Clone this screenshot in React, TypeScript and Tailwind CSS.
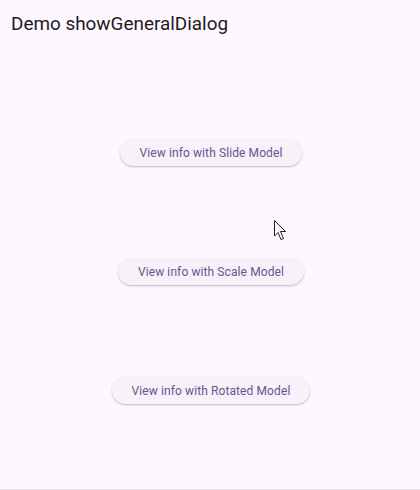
import React from 'react';

const models = ['Slide', 'Scale', 'Rotated'];

function Cursor() {
  return (
    <svg
      className="absolute left-[273px] top-[219px]"
      width="16"
      height="24"
      viewBox="0 0 16 24"
    >
      <path
        d="M1.5 1.5 L1.5 17 L5 13.5 L8 20.5 L10.5 19.5 L7.5 12.5 L12.5 12.5 Z"
        fill="#ffffff"
        stroke="#1d1b20"
        strokeWidth="1"
        strokeLinejoin="round"
      />
    </svg>
  );
}

export default function App() {
  return (
    <div
      className="relative flex h-[490px] w-full flex-col bg-[#fef7ff]"
      style={{ fontFamily: 'Roboto, "Noto Sans", sans-serif' }}
    >
      <header className="flex h-[49px] items-center px-[11px]">
        <h1 className="text-[18.9px] font-normal text-[#1d1b20]">Demo showGeneralDialog</h1>
      </header>
      <main className="flex flex-1 flex-col items-center gap-[92px] pl-[2px] pt-[90px]">
        {models.map((m) => (
          <button
            key={m}
            className="h-[27px] rounded-full bg-[#f7f2fa] px-[20px] text-[12px] tracking-[0.1px] text-[#65558f] shadow-[0_1px_2px_rgba(0,0,0,0.25)]"
          >
            View info with {m} Model
          </button>
        ))}
      </main>
      <div className="h-px bg-[#e6e0e9]" />
      <Cursor />
    </div>
  );
}
